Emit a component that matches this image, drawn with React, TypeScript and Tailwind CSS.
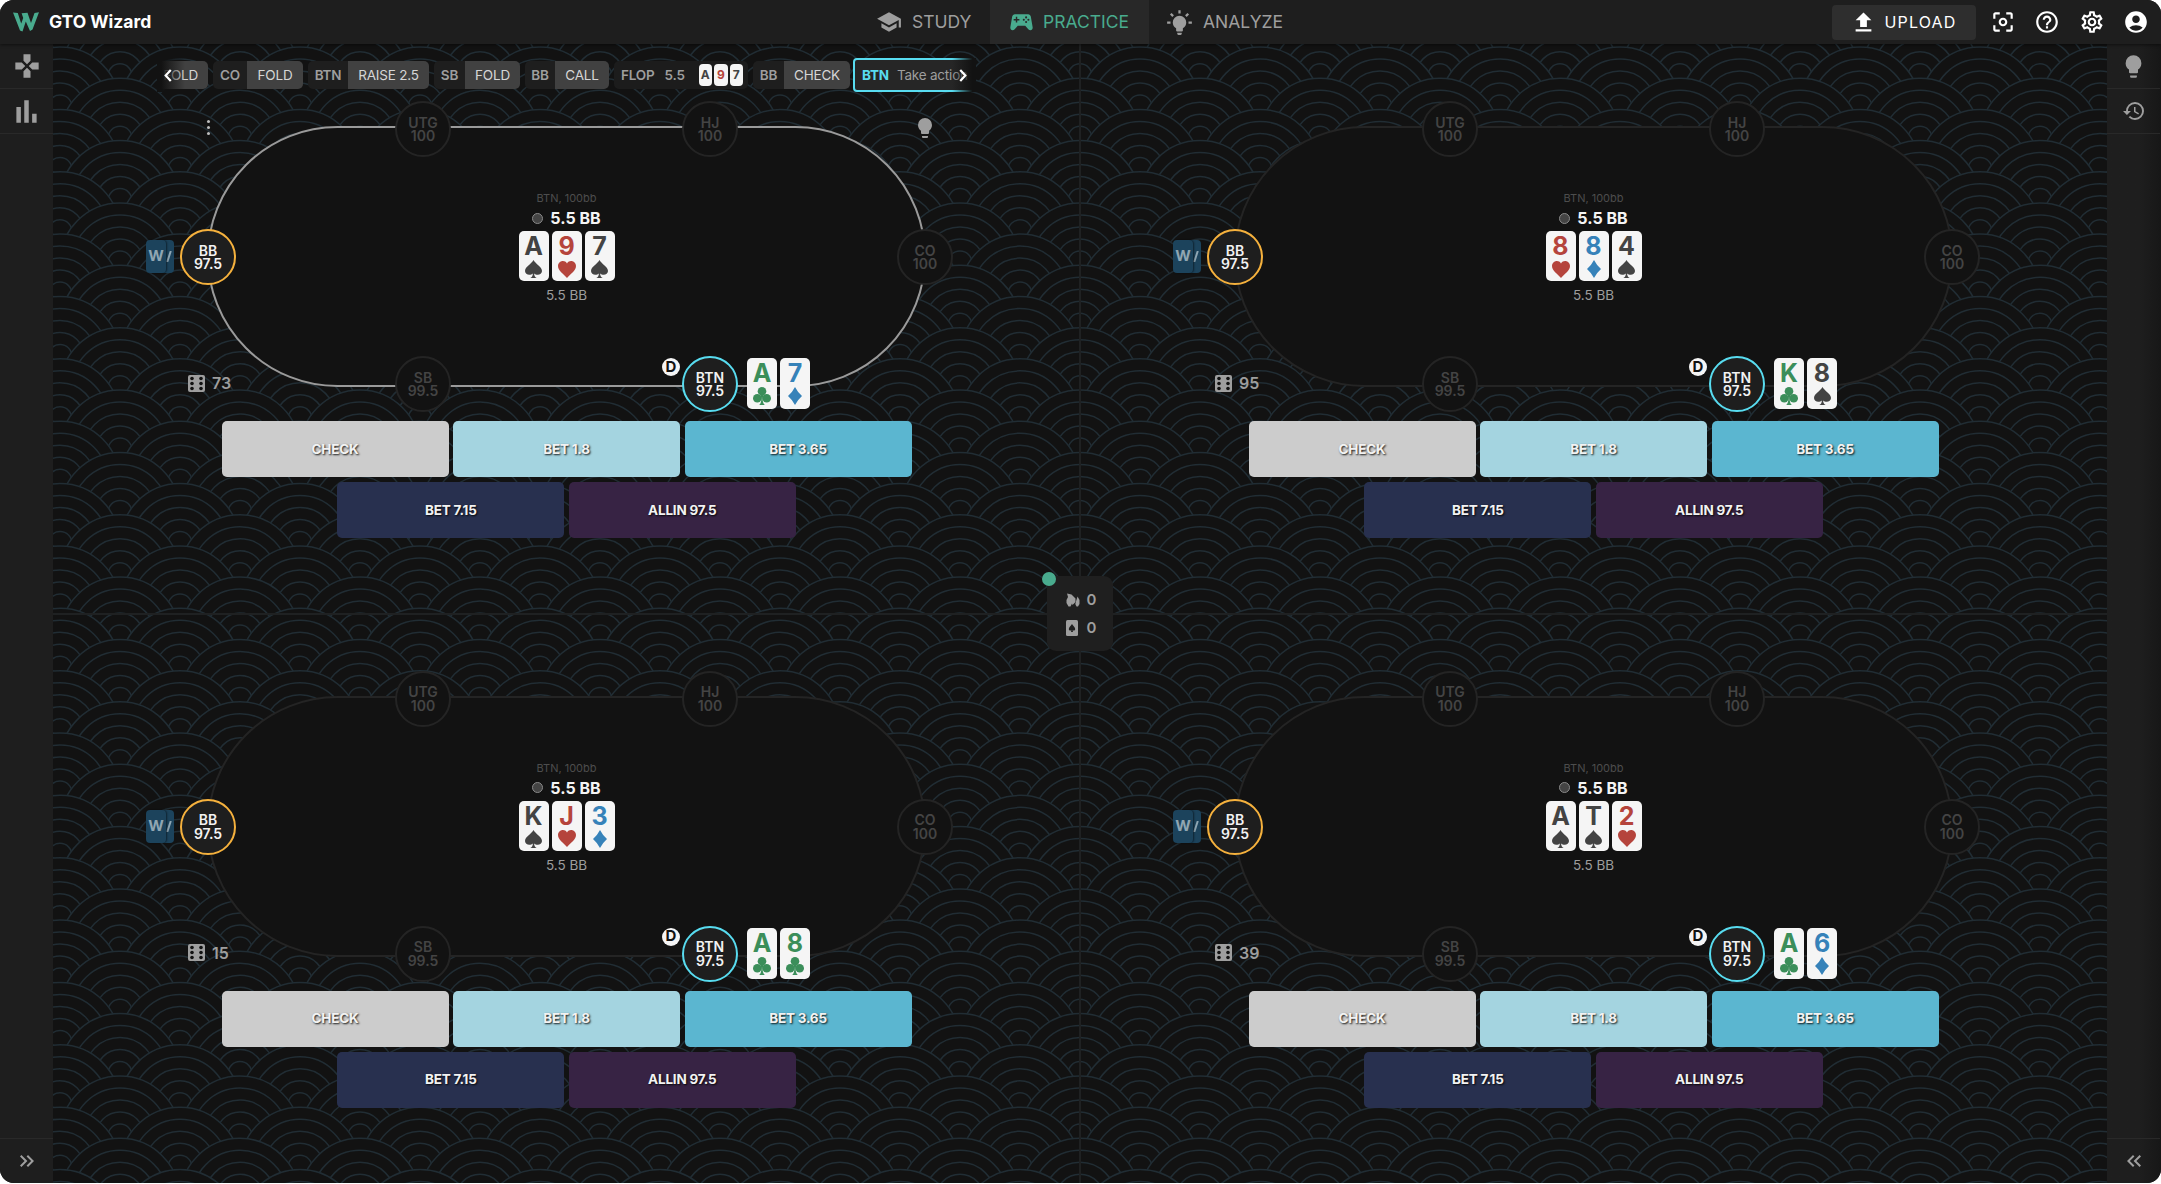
import type { ReactNode } from "react";
import {
  MdAccountCircle, MdCenterFocusWeak, MdFileUpload, MdGamepad, MdHelpOutline, MdHistory,
  MdKeyboardDoubleArrowLeft, MdKeyboardDoubleArrowRight, MdOutlineSettings, MdSchool,
} from "react-icons/md";

type Suit = "s" | "h" | "d" | "c";
type CardT = { rank: string; suit: Suit };

const suitColor: Record<Suit, string> = {
  s: "text-[#434343]",
  h: "text-[#b5443c]",
  d: "text-[#3682b9]",
  c: "text-[#3b8e5a]",
};

const c = (code: string): CardT => ({ rank: code[0], suit: code[1] as Suit });

const tables = [
  { id: 1, board: ["As", "9h", "7s"], hand: ["Ac", "7d"], rng: 73, active: true },
  { id: 2, board: ["8h", "8d", "4s"], hand: ["Kc", "8s"], rng: 95, active: false },
  { id: 3, board: ["Ks", "Jh", "3d"], hand: ["Ac", "8c"], rng: 15, active: false },
  { id: 4, board: ["As", "Ts", "2h"], hand: ["Ac", "6d"], rng: 39, active: false },
];

const foldedSeats = [
  { pos: "UTG", stack: "100", place: "left-[186px] top-[-27px]" },
  { pos: "HJ", stack: "100", place: "left-[473px] top-[-27px]" },
  { pos: "CO", stack: "100", place: "left-[688px] top-[101px]" },
  { pos: "SB", stack: "99.5", place: "left-[186px] top-[228px]" },
];

const history = [
  { pos: "CO", action: "FOLD", w: "w-[90px]", posW: "w-[34px]" },
  { pos: "BTN", action: "RAISE 2.5", w: "w-[121px]", posW: "w-[40px]" },
  { pos: "SB", action: "FOLD", w: "w-[86px]", posW: "w-[31px]" },
  { pos: "BB", action: "CALL", w: "w-[84px]", posW: "w-[30px]" },
];

function Bulb({ className }: { className: string }) {
  return (
    <svg viewBox="0 0 24 24" fill="currentColor" className={className}>
      <path d="M12,2A7,7 0 0,0 5,9C5,11.38 6.19,13.47 8,14.74V17A1,1 0 0,0 9,18H15A1,1 0 0,0 16,17V14.74C17.81,13.47 19,11.38 19,9A7,7 0 0,0 12,2M9,21A1,1 0 0,0 10,22H14A1,1 0 0,0 15,21V20H9V21Z" />
    </svg>
  );
}

function BulbOn() {
  return (
    <svg viewBox="0 0 24 24" fill="currentColor" className="size-[27px]">
      <path d="M12,6A6,6 0 0,1 18,12C18,14.22 16.79,16.16 15,17.2V19A1,1 0 0,1 14,20H10A1,1 0 0,1 9,19V17.2C7.21,16.16 6,14.22 6,12A6,6 0 0,1 12,6M14,21V22A1,1 0 0,1 13,23H11A1,1 0 0,1 10,22V21H14M20,11H23V13H20V11M1,11H4V13H1V11M13,1V4H11V1H13M4.92,3.5L7.05,5.64L5.63,7.05L3.5,4.93L4.92,3.5M16.95,5.63L19.07,3.5L20.5,4.93L18.37,7.05L16.95,5.63Z" />
    </svg>
  );
}

function Controller() {
  return (
    <svg viewBox="0 0 24 18" className="h-[18px] w-[23px]">
      <path fill="currentColor" d="M5.2 0.8h13.6c1.6 0 2.6 1 2.9 2.5l1.9 11c.3 1.8-.7 3.2-2.3 3.2-.9 0-1.6-.4-2.2-1l-3.2-3.6H8.1l-3.2 3.6c-.6.6-1.3 1-2.2 1C1.1 17.5.1 16.1.4 14.3l1.9-11C2.6 1.8 3.6.8 5.2.8z" />
      <path d="M6.8 3.6v6M3.8 6.6h6" stroke="#282828" strokeWidth="1.5" />
      <g fill="#282828">
        <circle cx="16.8" cy="4.2" r="1.1" />
        <circle cx="16.8" cy="9" r="1.1" />
        <circle cx="14.4" cy="6.6" r="1.1" />
        <circle cx="19.2" cy="6.6" r="1.1" />
      </g>
    </svg>
  );
}

function SuitIcon({ suit }: { suit: Suit }) {
  if (suit === "s")
    return (
      <svg viewBox="4 2 16 20" preserveAspectRatio="none" fill="currentColor" className="h-[18px] w-[17px]">
        <path d="M12 2C10 6.5 4 9.5 4 14.2C4 16.8 6 18.4 8 18.4C9.4 18.4 10.6 17.9 11.4 16.9C11.3 19.3 10.8 20.6 9 22H15C13.2 20.6 12.7 19.3 12.6 16.9C13.4 17.9 14.6 18.4 16 18.4C18 18.4 20 16.8 20 14.2C20 9.5 14 6.5 12 2Z" />
      </svg>
    );
  if (suit === "h")
    return (
      <svg viewBox="2 3 20 18.35" preserveAspectRatio="none" fill="currentColor" className="h-[17px] w-[18px]">
        <path d="M12 21.35C8 17 2 13.5 2 8.5 2 5.42 4.42 3 7.5 3c1.74 0 3.41.81 4.5 2.59C13.09 3.81 14.76 3 16.5 3 19.58 3 22 5.42 22 8.5c0 5-6 8.5-10 12.85z" />
      </svg>
    );
  if (suit === "d")
    return (
      <svg viewBox="0 0 14 18" fill="currentColor" className="h-[18px] w-[14px]">
        <path d="M7 0Q9.500 5 14 9Q9.500 13 7 18Q4.500 13 0 9Q4.500 5 7 0Z" />
      </svg>
    );
  return (
    <svg viewBox="0 0 18 18" fill="currentColor" className="size-[18px]">
      <circle cx="9" cy="4.3" r="4.3" />
      <circle cx="4.3" cy="11.2" r="4.3" />
      <circle cx="13.7" cy="11.2" r="4.3" />
      <path d="M7.5 8h3l-.9 3.5c.1 3 .5 5 2.200 6.500H6.200c1.700-1.500 2.100-3.500 2.200-6.500z" />
    </svg>
  );
}

function PlayingCard({ rank, suit }: CardT) {
  return (
    <div className={`flex h-full w-[30px] flex-col items-center rounded-[5px] bg-[#f5f5f5] ${suitColor[suit]}`}>
      <span className="mt-[3px] text-[25px] leading-[25px] font-bold">{rank}</span>
      <span className="mt-px flex h-[18px] items-center"><SuitIcon suit={suit} /></span>
    </div>
  );
}

// overlapping wave fans; each row is painted over the one above it
function Waves() {
  const rows = Array.from({ length: 40 }, (_, i) => i);
  const cols = Array.from({ length: 20 }, (_, i) => i);
  return (
    <svg className="absolute inset-0 size-full" fill="#121212" stroke="#212d34" strokeWidth="1.5">
      {rows.map((row) =>
        cols.map((col) => (
          <g key={`${row}-${col}`}>
            {[60, 48, 36, 24, 12].map((r) => (
              <circle key={r} r={r} cx={col * 120 + (row % 2 ? 67 : 7) - 60} cy={row * 31.18 - 30.5} />
            ))}
          </g>
        ))
      )}
    </svg>
  );
}

function Seat({ pos, stack, className }: { pos: string; stack: string; className: string }) {
  return (
    <div className={`absolute flex size-14 flex-col items-center justify-center rounded-full border-2 text-[14px] leading-[13.5px] font-semibold ${className}`}>
      <span>{pos}</span>
      <span>{stack}</span>
    </div>
  );
}

function VillainCards() {
  return (
    <div className="absolute top-[112px] left-[-63px] flex">
      <div className="z-10 flex h-[33px] w-5 items-center justify-center rounded-[4px] bg-[#1c435c] text-[15px] font-bold text-[#8fa6b3] shadow-[1px_0_2px_rgba(0,0,0,0.5)]">W</div>
      <div className="-ml-3 flex h-[33px] w-5 items-center justify-end rounded-[4px] bg-[#1c435c] pr-[2px]">
        <svg viewBox="0 0 6 11" className="h-[11px] w-[6px]" stroke="#8fa6b3" strokeWidth="2"><path d="M1.2 11L4.800 0" /></svg>
      </div>
    </div>
  );
}

function Dice() {
  return (
    <svg viewBox="0 0 17 17" className="size-[17px]">
      <rect width="17" height="17" rx="2" fill="#9e9e9e" />
      {[3.5, 8.5, 13.5].map((y) => (
        <g key={y} fill="#121212">
          <circle cx="4" cy={y} r="1.8" />
          <circle cx="13" cy={y} r="1.8" />
        </g>
      ))}
    </svg>
  );
}

function HistoryBar() {
  return (
    <div className="relative flex h-[34px] w-[819px] items-center gap-[5px] overflow-hidden text-[13.5px] tracking-[-0.2px]">
      <div className="flex h-7 w-[51px] shrink-0 items-center justify-end rounded-[5px] bg-[#414141] pr-[10px] text-[#d6d6d6]">FOLD</div>
      {history.map((h, i) => (
        <div key={i} className={`flex h-7 shrink-0 overflow-hidden rounded-[5px] ${h.w}`}>
          <span className={`flex items-center justify-center bg-[#1e1e1e] font-semibold text-[#9e9e9e] ${h.posW}`}>{h.pos}</span>
          <span className="flex flex-1 items-center justify-center bg-[#414141] text-[#d6d6d6]">{h.action}</span>
        </div>
      ))}
      <div className="flex h-7 w-[134px] shrink-0 items-center rounded-[5px] bg-[#1c1c1c] pl-[7px] font-semibold text-[#9e9e9e]">
        <span>FLOP</span>
        <span className="ml-[10px]">5.5</span>
        <div className="ml-auto flex gap-[2px] pr-[5px] text-[12px] font-bold">
          {["As", "9h", "7s"].map((x) => (
            <span key={x} className={`flex h-[22px] w-[13.5px] items-center justify-center rounded-[4px] bg-[#f5f5f5] ${suitColor[c(x).suit]}`}>{c(x).rank}</span>
          ))}
        </div>
      </div>
      <div className="flex h-7 w-[97px] shrink-0 overflow-hidden rounded-[5px]">
        <span className="flex w-[31px] items-center justify-center bg-[#1e1e1e] font-semibold text-[#9e9e9e]">BB</span>
        <span className="flex flex-1 items-center justify-center bg-[#414141] text-[#d6d6d6]">CHECK</span>
      </div>
      <div className="-ml-[2px] flex h-[34px] w-[130px] shrink-0 items-center rounded-[4px] border-2 border-[#58dcf0] bg-[#262626] pl-[7px] whitespace-nowrap">
        <span className="font-bold text-[#58dcf0]">BTN</span>
        <span className="ml-2 text-[#9e9e9e]">Take action</span>
      </div>
      <div className="absolute inset-y-0 left-0 flex w-7 items-center bg-linear-to-r from-[#121212] from-15% to-transparent pl-[7px]">
        <svg viewBox="0 0 8 14" className="h-[13px] w-2" fill="none" stroke="#fff" strokeWidth="2.4"><path d="M7 1L1.5 7L7 13" /></svg>
      </div>
      <div className="absolute inset-y-0 right-0 flex w-6 items-center justify-end bg-linear-to-l from-[#121212] from-15% to-transparent pr-[9px]">
        <svg viewBox="0 0 8 14" className="h-[13px] w-2" fill="none" stroke="#fff" strokeWidth="2.4"><path d="M1 1L6.500 7L1 13" /></svg>
      </div>
    </div>
  );
}

function ActionButton({ label, color }: { label: string; color: string }) {
  return (
    <button className={`h-14 w-[227px] rounded-[5px] text-[13.5px] font-bold tracking-[-0.2px] text-[#f2f2f2] [text-shadow:1px_1px_2px_rgba(0,0,0,0.9)] ${color}`}>
      {label}
    </button>
  );
}

function Table({ t }: { t: (typeof tables)[number] }) {
  return (
    <section className="flex flex-col items-center">
      <div className="flex h-[82px] w-full justify-center pt-[14px]">{t.active && <HistoryBar />}</div>
      <div className={`relative flex h-[261px] w-[719px] flex-col items-center rounded-full border-2 bg-[#121212] ${t.active ? "border-[#9a9a9a]" : "border-[#242424]"}`}>
        <span className="mt-[62px] text-[11px] leading-4 text-[#4d4d4d]">BTN, 100bb</span>
        <div className="mt-[2px] flex h-5 items-center gap-[7px] text-[16px] font-bold text-[#f5f5f5]">
          <span className="size-[11px] rounded-full border border-[#8a8a8a] bg-[#444]" />
          5.5 BB
        </div>
        <div className="mt-[3px] flex h-[50px] gap-[3px]">
          {t.board.map((x) => <PlayingCard key={x} {...c(x)} />)}
        </div>
        <span className="mt-1 text-[13.5px] leading-5 text-[#9e9e9e]">5.5 BB</span>

        {foldedSeats.map((s) => (
          <Seat key={s.pos} pos={s.pos} stack={s.stack} className={`border-[#242424] bg-[#121212] text-[#444] ${s.place}`} />
        ))}
        <Seat pos="BB" stack="97.5" className="top-[101px] left-[-29px] border-[#f5b13d] bg-[#1e1e1e] text-[#f2f2f2]" />
        <Seat pos="BTN" stack="97.5" className="top-[228px] left-[473px] border-[#58dcf0] bg-[#1e1e1e] text-[#f2f2f2]" />
        <VillainCards />
        <span className="absolute top-[230px] left-[453px] flex size-[18px] items-center justify-center rounded-full bg-[#f5f5f5] text-[15px] font-bold text-[#121212]">D</span>
        <div className="absolute top-[230px] left-[538px] flex h-[51px] gap-[3px]">
          {t.hand.map((x) => <PlayingCard key={x} {...c(x)} />)}
        </div>
        <div className="absolute top-[243px] left-[-21px] flex items-center gap-[7px] text-[16px] font-semibold text-[#9e9e9e]">
          <Dice />
          {t.rng}
        </div>
        {t.active && (
          <>
            <div className="absolute top-[-8px] left-[-2px] flex flex-col gap-[3px]">
              <i className="size-[3px] rounded-full bg-[#bdbdbd]" />
              <i className="size-[3px] rounded-full bg-[#bdbdbd]" />
              <i className="size-[3px] rounded-full bg-[#bdbdbd]" />
            </div>
            <Bulb className="absolute top-[-12px] left-[704px] size-6 text-[#9e9e9e]" />
          </>
        )}
      </div>
      <div className="mt-[34px] flex flex-col items-center gap-[5px]">
        <div className="flex gap-[4.5px]">
          <ActionButton label="CHECK" color="bg-[#cccccc]" />
          <ActionButton label="BET 1.8" color="bg-[#a4d4e0]" />
          <ActionButton label="BET 3.65" color="bg-[#5bb6d0]" />
        </div>
        <div className="flex gap-[4.5px]">
          <ActionButton label="BET 7.15" color="bg-[#28304f]" />
          <ActionButton label="ALLIN 97.5" color="bg-[#372344]" />
        </div>
      </div>
    </section>
  );
}

function Stats() {
  return (
    <div className="absolute top-[532px] left-[994px] flex h-[75px] w-[66px] flex-col items-center justify-center gap-[4px] rounded-[9px] bg-[#1f1f1f] pt-px pl-[2px] text-[15px] font-semibold text-[#9e9e9e]">
      <span className="absolute top-[-4px] left-[-5px] size-[14px] rounded-full bg-[#49ab8e]" />
      <div className="flex h-6 items-center gap-[7px]">
        <svg viewBox="0 0 14 14" className="size-[14px]" fill="currentColor">
          <path d="M1 .5L5.500 1.500L9.500 5.500L9.500 9L6.500 12L6 10.500L4.500 13.500H2.500L.5 10V7L2 4Z" />
          <path d="M11.500 3.500L13.500 7V11L12 13.500H10.500L9.300 11L10.300 7.500Z" />
        </svg>
        0
      </div>
      <div className="flex h-6 items-center gap-[9px]">
        <svg viewBox="0 0 12 16" className="h-4 w-3">
          <rect width="12" height="16" rx="1.5" fill="#9e9e9e" />
          <path fill="#1f1f1f" d="M6 4C5 6 2.800 7 2.800 9c0 1.700 1.900 2 2.700 1.200L5 12h2l-.5-1.800C7.300 11 9.200 10.700 9.200 9 9.200 7 7 6 6 4z" />
        </svg>
        0
      </div>
    </div>
  );
}

function NavItem({ children, active }: { children: ReactNode; active?: boolean }) {
  return (
    <a className={`flex h-11 items-center gap-[10px] text-[17.5px] ${active ? "w-[159px] justify-center bg-[#282828] text-[#49ab8e]" : "text-[#9e9e9e]"}`}>
      {children}
    </a>
  );
}

function RailItem({ children, bottom }: { children: ReactNode; bottom?: boolean }) {
  return (
    <div className={`flex h-[45px] w-full items-center justify-center text-[#9e9e9e] ${bottom ? "mt-auto border-t border-[#292929]" : "border-b border-[#292929]"}`}>
      {children}
    </div>
  );
}

export default function App() {
  return (
    <div className="h-[1184px] w-[2161px] bg-white font-['Inter','Noto_Sans',sans-serif]">
      <div className="flex h-[1183px] flex-col overflow-hidden rounded-[14px] bg-[#121212]">
        <header className="relative z-20 flex h-11 shrink-0 items-center bg-[#1e1e1e] shadow-[0_1px_3px_rgba(0,0,0,0.5)]">
          <div className="flex w-[876px] items-center pl-[13px]">
            <svg viewBox="0 0 26 20" className="h-5 w-[26px]" fill="#49ab8e">
              <path d="M0 .5L4.800 1L8.200 11.500L10.200 6L8.600 1.200L14.500 .8L18 11L21.500 1L26 .2L19.500 17.500L17 19L12.800 9.500L9.500 19.500L7 18.500Z" />
            </svg>
            <span className="ml-[10px] text-[17.5px] font-bold text-white">GTO Wizard</span>
          </div>
          <div className="flex w-[114px]">
            <NavItem><MdSchool className="size-[26px]" />STUDY</NavItem>
          </div>
          <NavItem active><Controller />PRACTICE</NavItem>
          <div className="ml-[17px]">
            <NavItem><BulbOn />ANALYZE</NavItem>
          </div>
          <div className="ml-auto flex items-center text-white">
            <button className="flex h-[35px] w-[144px] items-center justify-center gap-[7px] rounded-[4px] bg-[#2e2e2e] text-[16px] tracking-[1.2px]">
              <MdFileUpload className="size-[27px]" />UPLOAD
            </button>
            <div className="ml-[14px] flex gap-[18.5px] pr-[12px]">
              <MdCenterFocusWeak className="size-[26px]" />
              <MdHelpOutline className="size-[26px]" />
              <MdOutlineSettings className="size-[26px]" />
              <MdAccountCircle className="size-[26px]" />
            </div>
          </div>
        </header>
        <div className="flex min-h-0 flex-1">
          <aside className="flex w-[53px] flex-col bg-[#1e1e1e]">
            <RailItem><MdGamepad className="size-7" /></RailItem>
            <RailItem>
              <svg viewBox="0 0 24 24" fill="currentColor" className="size-[27px]"><path d="M3,22V8H7V22H3M10,22V2H14V22H10M17,22V14H21V22H17Z" /></svg>
            </RailItem>
            <RailItem bottom><MdKeyboardDoubleArrowRight className="size-6" /></RailItem>
          </aside>
          <main className="relative flex-1 overflow-hidden">
            <Waves />
            <div className="relative grid h-full grid-cols-2 grid-rows-2">
              <div className="absolute inset-y-0 left-[1026px] w-[2px] bg-[#1f2122]" />
              <div className="absolute inset-x-0 top-[569px] h-[2px] bg-[#1f2122]" />
              {tables.map((t) => <Table key={t.id} t={t} />)}
              <Stats />
            </div>
          </main>
          <aside className="flex w-[54px] flex-col bg-linear-to-r from-[#1e1e1e] from-60% to-[#171717] pr-px">
            <RailItem><Bulb className="size-[27px]" /></RailItem>
            <RailItem><MdHistory className="size-6" /></RailItem>
            <RailItem bottom><MdKeyboardDoubleArrowLeft className="size-6" /></RailItem>
          </aside>
        </div>
      </div>
    </div>
  );
}
